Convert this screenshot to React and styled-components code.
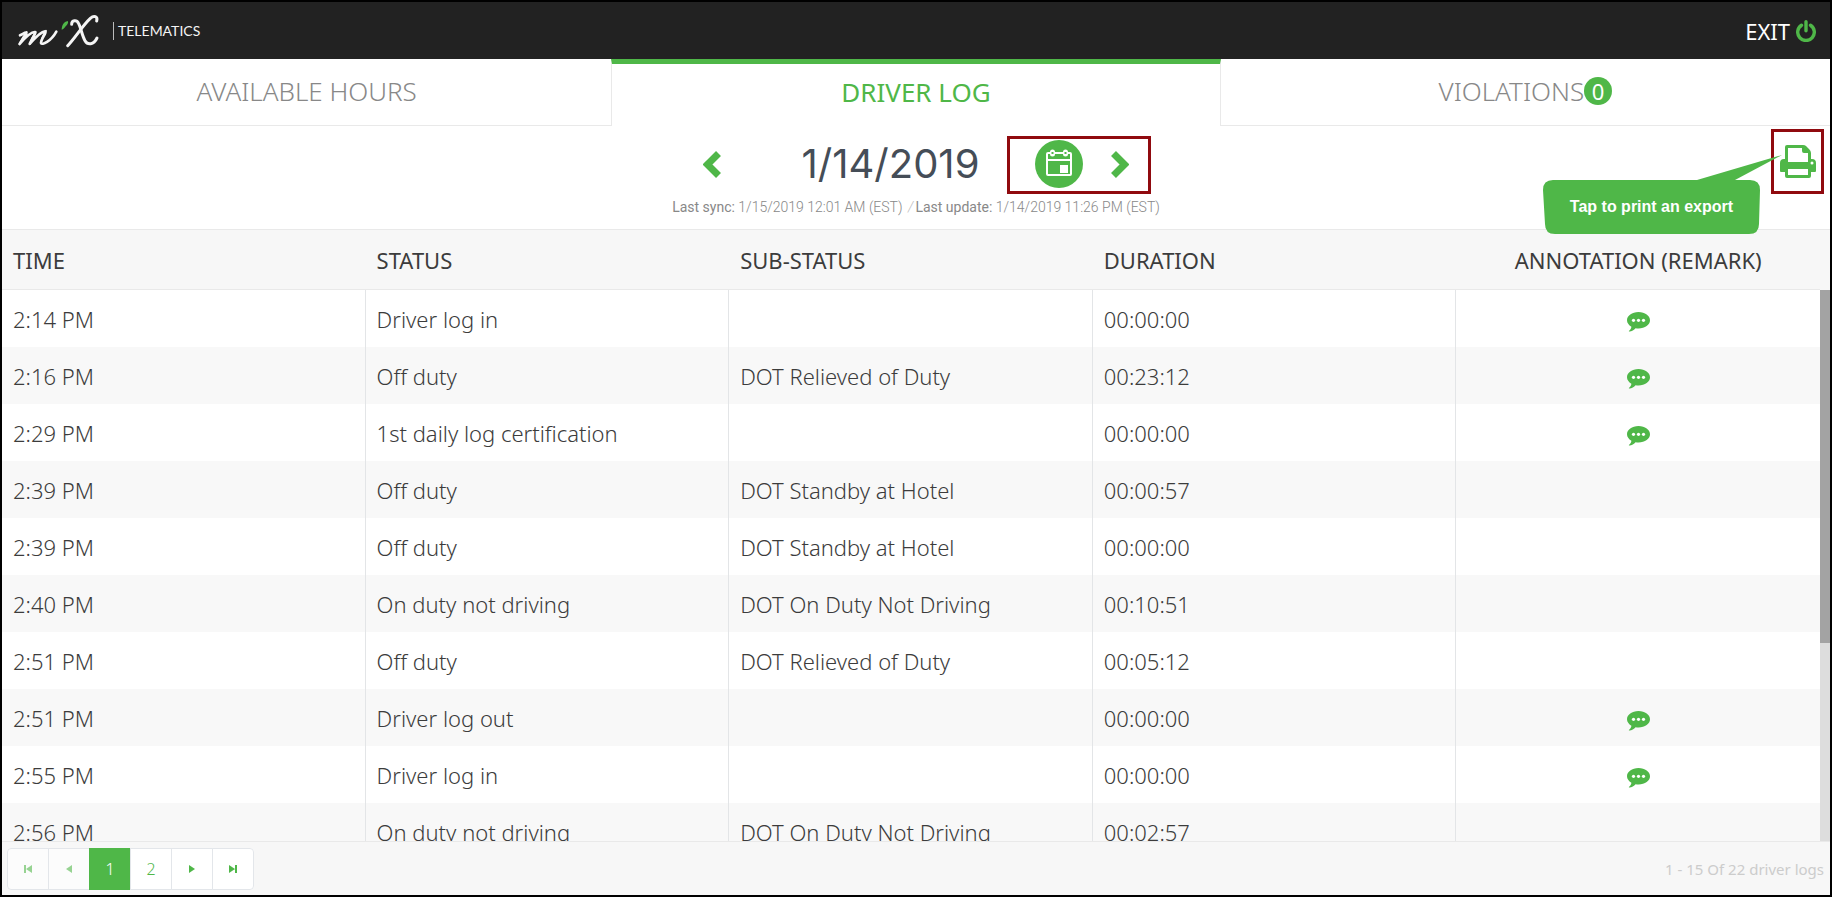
import React from "react";
import styled, { createGlobalStyle } from "styled-components";

const green = "#4fb748";
const line = "#e9e9e9";

const logs = [
  ["2:14 PM", "Driver log in", "", "00:00:00", true],
  ["2:16 PM", "Off duty", "DOT Relieved of Duty", "00:23:12", true],
  ["2:29 PM", "1st daily log certification", "", "00:00:00", true],
  ["2:39 PM", "Off duty", "DOT Standby at Hotel", "00:00:57", false],
  ["2:39 PM", "Off duty", "DOT Standby at Hotel", "00:00:00", false],
  ["2:40 PM", "On duty not driving", "DOT On Duty Not Driving", "00:10:51", false],
  ["2:51 PM", "Off duty", "DOT Relieved of Duty", "00:05:12", false],
  ["2:51 PM", "Driver log out", "", "00:00:00", true],
  ["2:55 PM", "Driver log in", "", "00:00:00", true],
  ["2:56 PM", "On duty not driving", "DOT On Duty Not Driving", "00:02:57", false],
];

function App() {
  return (
    <>
      <GlobalStyle />
      <Page>
        <Header>
          <Brand>
            <Logo />
            <BrandName>TELEMATICS</BrandName>
          </Brand>
          <Exit href="#exit">
            EXIT
            <PowerIcon />
          </Exit>
        </Header>
        <Tabs>
          <Tab>AVAILABLE HOURS</Tab>
          <Tab $active>DRIVER LOG</Tab>
          <Tab>
            VIOLATIONS
            <Badge>0</Badge>
          </Tab>
        </Tabs>
        <DateBar>
          <DatePicker>
            <DateRow>
              <IconButton aria-label="Previous day">
                <Chevron points="15.5,2.5 4.5,13.5 15.5,24.5" />
              </IconButton>
              <DateTitle>1/14/2019</DateTitle>
              <DateTools>
                <CalendarButton aria-label="Pick a date">
                  <CalendarIcon />
                </CalendarButton>
                <IconButton aria-label="Next day">
                  <Chevron points="2.5,2.5 13.5,13.5 2.5,24.5" />
                </IconButton>
              </DateTools>
            </DateRow>
            <SyncInfo>
              <b>Last sync:</b> 1/15/2019 12:01 AM (EST) <i>/</i>
              <b>Last update:</b> 1/14/2019 11:26 PM (EST)
            </SyncInfo>
          </DatePicker>
          <PrintBox>
            <IconButton aria-label="Print">
              <PrinterIcon />
            </IconButton>
            <Callout>
              <CalloutShape />
              <CalloutText>Tap to print an export</CalloutText>
            </Callout>
          </PrintBox>
        </DateBar>
        <LogArea>
          <LogTable>
            <thead>
              <tr>
                <Th>TIME</Th>
                <Th>STATUS</Th>
                <Th>SUB-STATUS</Th>
                <Th>DURATION</Th>
                <Th $center>ANNOTATION (REMARK)</Th>
              </tr>
            </thead>
            <tbody>
              {logs.map(([time, status, sub, duration, remark], i) => (
                <Row key={i}>
                  <Td>{time}</Td>
                  <Td>{status}</Td>
                  <Td>{sub}</Td>
                  <Td>{duration}</Td>
                  <Td $center>
                    {remark && (
                      <IconButton aria-label="Remark">
                        <RemarkIcon />
                      </IconButton>
                    )}
                  </Td>
                </Row>
              ))}
            </tbody>
          </LogTable>
          <ScrollColumn>
            <ScrollTrack>
              <ScrollThumb />
            </ScrollTrack>
          </ScrollColumn>
        </LogArea>
        <Footer>
          <Pager>
            <PageButton aria-label="First page" disabled>
              <PagerIcon d="M0 0h2v8H0zM8 0v8L2 4z" />
            </PageButton>
            <PageButton aria-label="Previous page" disabled>
              <PagerIcon d="M7 0v8L1 4z" />
            </PageButton>
            <PageButton $active>1</PageButton>
            <PageButton>2</PageButton>
            <PageButton aria-label="Next page">
              <PagerIcon d="M1 0v8l6-4z" />
            </PageButton>
            <PageButton aria-label="Last page">
              <PagerIcon d="M6 0h2v8H6zM0 0v8l6-4z" />
            </PageButton>
          </Pager>
          <Summary>1 - 15 Of 22 driver logs</Summary>
        </Footer>
      </Page>
    </>
  );
}

function Logo() {
  return (
    <svg width="84" height="37" viewBox="20 20 252 111" fill="none">
      <g stroke="#f4f4f4" strokeLinecap="round" strokeLinejoin="round">
        <path
          strokeWidth="8"
          d="M32 90c8-3 14-9 19-8 3 2-14 24-20 34 12-14 34-37 46-36 5 2-12 24-16 36 12-14 32-37 46-38 7 1-14 26-12 35 3 8 30-5 46-34"
        />
        <path strokeWidth="5" d="M52 80c-8 10-16 24-22 36M79 80c-7 10-14 24-17 36M110 76c-8 12-14 24-14 34" />
        <path strokeWidth="9" d="M187 57c0-13 15-14 20-4 8 14 11 38 20 53 8 14 26 13 36-8" />
        <path strokeWidth="9" d="M262 47c4-14-8-18-19-8-22 20-45 58-68 82" />
      </g>
      <path fill={green} d="M157 73c0-12 6-24 18-26 4 5-2 12-6 16-4 5-7 9-12 10z" />
    </svg>
  );
}

function PowerIcon() {
  return (
    <svg width="20" height="22" viewBox="0 0 20 22" fill="none">
      <g stroke={green} strokeWidth="3.4" strokeLinecap="round">
        <path d="M5.500 5.200a8.300 8.300 0 1 0 9 0" />
        <path d="M10 1.700v9" />
      </g>
    </svg>
  );
}

function Chevron({ points }) {
  return (
    <svg width="18" height="27" viewBox="0 0 18 27" fill="none">
      <polyline points={points} stroke={green} strokeWidth="7" />
    </svg>
  );
}

function CalendarIcon() {
  return (
    <svg width="48" height="48" viewBox="0 0 48 48" fill="none">
      <rect x="12" y="13" width="24" height="22" rx="1" stroke="#fff" strokeWidth="2" />
      <path d="M12 20h24" stroke="#fff" strokeWidth="2" />
      <path d="M17.500 12v2M30.500 12v2" stroke="#fff" strokeWidth="5" strokeLinecap="round" />
      <path d="M17.500 12v2M30.500 12v2" stroke={green} strokeWidth="2" />
      <rect x="25" y="25" width="8" height="8" fill="#fff" />
    </svg>
  );
}

function PrinterIcon() {
  return (
    <svg width="36" height="33" viewBox="0 0 36 33">
      <path
        fill={green}
        fillRule="evenodd"
        d="M5 2q0-2 2-2h16q2 0 3 1l3 3q2 2 2 4v6h1q4 0 4 4v8q0 1-1 1h-4v4q0 2-2 2H7q-2 0-2-2v-4H1q-1 0-1-1v-8q0-4 4-4h1zM8 3v14h20V8h-4q-2 0-2-2V3zM8 24v6h20v-6zM32 16.500a1.500 1.500 0 1 0 0 3a1.500 1.500 0 0 0 0-3z"
      />
    </svg>
  );
}

function RemarkIcon() {
  return (
    <svg width="23" height="20" viewBox="0 0 23 20">
      <path
        fill={green}
        d="M11.500 0C18 0 23 3.700 23 8.300s-5 8.200-11.500 8.200c-1 0-2-.1-2.900-.3C7 17.800 4.800 19.300 2.400 19.600c-.6 0-.7-.6-.3-.9 1.300-1 2.100-2.100 2.300-4C1.700 13.200 0 10.900 0 8.300 0 3.700 5 0 11.500 0z"
      />
      <g fill="#fff">
        <circle cx="6.500" cy="8.300" r="1.600" />
        <circle cx="11.500" cy="8.300" r="1.600" />
        <circle cx="16.500" cy="8.300" r="1.600" />
      </g>
    </svg>
  );
}

function CalloutShape() {
  return (
    <CalloutSvg width="240" height="80" viewBox="0 0 240 80">
      <path
        fill={green}
        d="M10 25H154L239 0L192 25H207q10 0 10 10L216 69q0 10-10 10H12q-10 0-10-10L0 35q0-10 10-10z"
      />
    </CalloutSvg>
  );
}

function PagerIcon({ d }) {
  return (
    <svg width="8" height="8" viewBox="0 0 8 8">
      <path fill="currentColor" d={d} />
    </svg>
  );
}

const GlobalStyle = createGlobalStyle`
  * {
    box-sizing: border-box;
  }
  body {
    margin: 0;
    font-family: "Noto Sans", sans-serif;
    font-weight: 300;
    color: #3c3c3c;
    background: #fff;
  }
  button {
    padding: 0;
    border: 0;
    background: none;
    font: inherit;
    cursor: pointer;
  }
  svg {
    display: block;
  }
`;

const Page = styled.div`
  display: flex;
  flex-direction: column;
  height: 100vh;
  border: 2px solid #000;
`;

const Header = styled.header`
  display: flex;
  align-items: center;
  justify-content: space-between;
  height: 57px;
  padding: 0 14px;
  background: #222;
`;

const Brand = styled.div`
  display: flex;
  align-items: center;
  gap: 13px;
`;

const BrandName = styled.span`
  padding-left: 4px;
  border-left: 1px solid #bbb;
  font: 400 14px/18px Lato, sans-serif;
  color: #f4f4f4;
`;

const Exit = styled.a`
  display: flex;
  align-items: center;
  gap: 6px;
  font-size: 22px;
  font-weight: 400;
  color: #fff;
  text-decoration: none;
`;

const Tabs = styled.nav`
  display: grid;
  grid-template-columns: repeat(3, 1fr);
  height: 67px;
`;

const Tab = styled.button`
  display: flex;
  align-items: center;
  justify-content: center;
  border-style: solid;
  border-color: ${(p) => (p.$active ? `${green} ${line} transparent` : line)};
  border-width: ${(p) => (p.$active ? "5px 1px 0" : "0 0 1px")};
  padding-bottom: ${(p) => (p.$active ? "7px" : "2px")};
  font-size: 26px;
  font-weight: ${(p) => (p.$active ? 400 : 300)};
  color: ${(p) => (p.$active ? green : "#888")};
`;

const Badge = styled.span`
  width: 28px;
  height: 28px;
  border-radius: 50%;
  background: ${green};
  font-size: 22px;
  font-weight: 400;
  line-height: 28px;
  color: #fff;
`;

const DateBar = styled.section`
  display: grid;
  grid-template-columns: 1fr auto 1fr;
  align-items: start;
  padding: 3px 6px 12px;
  border-bottom: 1px solid ${line};
`;

const DatePicker = styled.div`
  grid-column: 2;
  display: flex;
  flex-direction: column;
  align-items: center;
  gap: 9px;
  padding-top: 11px;
`;

const DateRow = styled.div`
  display: flex;
  align-items: center;
`;

const IconButton = styled.button`
  display: inline-block;
  vertical-align: middle;
`;

const DateTitle = styled.h1`
  margin: 0 56px 0 81px;
  font-family: Inter, sans-serif;
  font-size: 40px;
  font-weight: 400;
  line-height: 48px;
  color: #454d57;
`;

const DateTools = styled.div`
  position: relative;
  display: flex;
  align-items: center;
  gap: 28px;
  &::after {
    content: "";
    position: absolute;
    inset: -4px -22px -6px -28px;
    border: 3px solid #900a0f;
    pointer-events: none;
  }
`;

const CalendarButton = styled.button`
  border-radius: 50%;
  background: ${green};
`;

const SyncInfo = styled.p`
  margin: 0;
  font-family: Roboto, sans-serif;
  font-size: 14px;
  line-height: 20px;
  color: #888;
  b {
    font-weight: 400;
  }
  i {
    margin: 0 2px;
    color: #bbb;
  }
`;

const PrintBox = styled.div`
  position: relative;
  justify-self: end;
  display: flex;
  align-items: center;
  justify-content: center;
  width: 53px;
  height: 65px;
  border: 3px solid #900a0f;
`;

const Callout = styled.div`
  position: absolute;
  top: 23px;
  right: 38px;
  width: 240px;
  height: 80px;
  padding: 25px 23px 0 0;
  pointer-events: none;
`;

const CalloutSvg = styled.svg`
  position: absolute;
  inset: 0;
`;

const CalloutText = styled.span`
  position: relative;
  display: block;
  font: bold 16px/54px "Liberation Sans", Arial, sans-serif;
  text-align: center;
  white-space: nowrap;
  color: #fff;
`;

const LogArea = styled.main`
  flex: 1;
  display: grid;
  grid-template-columns: 1fr 10px;
  grid-template-rows: 100%;
  align-items: start;
  min-height: 0;
  overflow: hidden;
`;

const LogTable = styled.table`
  width: 100%;
  table-layout: fixed;
  border-spacing: 0;
  font-size: 22px;
`;

const Th = styled.th`
  height: 60px;
  padding: 0 11px;
  border-bottom: 1px solid ${line};
  background: #f7f7f7;
  font-weight: 400;
  text-align: ${(p) => (p.$center ? "center" : "left")};
`;

const Td = styled.td`
  height: 57px;
  padding: 0 11px;
  border-right: 1px solid #e3e5e7;
  text-align: ${(p) => (p.$center ? "center" : "left")};
  &:last-child {
    border-right: 0;
  }
`;

const Row = styled.tr`
  &:nth-child(even) {
    background: #f8f8f8;
  }
`;

const ScrollColumn = styled.div`
  align-self: stretch;
  padding-top: 60px;
  background: #f7f7f7;
`;

const ScrollTrack = styled.div`
  height: 100%;
  background: #ddd;
`;

const ScrollThumb = styled.div`
  height: 64%;
  background: #a3a3a3;
`;

const Footer = styled.footer`
  display: flex;
  align-items: center;
  justify-content: space-between;
  height: 54px;
  padding: 0 6px 0 5px;
  border-top: 1px solid ${line};
  background: #f7f7f7;
`;

const Pager = styled.div`
  display: flex;
  overflow: hidden;
  border-radius: 4px;
`;

const PageButton = styled.button`
  display: flex;
  align-items: center;
  justify-content: center;
  width: 42px;
  height: 42px;
  margin-left: -1px;
  border: 1px solid ${(p) => (p.$active ? green : "#e3e6ea")};
  background: ${(p) => (p.$active ? green : "#fff")};
  font-size: 16px;
  color: ${(p) => (p.$active ? "#fff" : green)};
  &:first-child {
    margin-left: 0;
    border-radius: 4px 0 0 4px;
  }
  &:last-child {
    border-radius: 0 4px 4px 0;
  }
  &:disabled {
    background: #fcfcfc;
    color: #97d392;
  }
`;

const Summary = styled.span`
  font-size: 15px;
  font-weight: 400;
  color: #ccc;
`;

export default App;
